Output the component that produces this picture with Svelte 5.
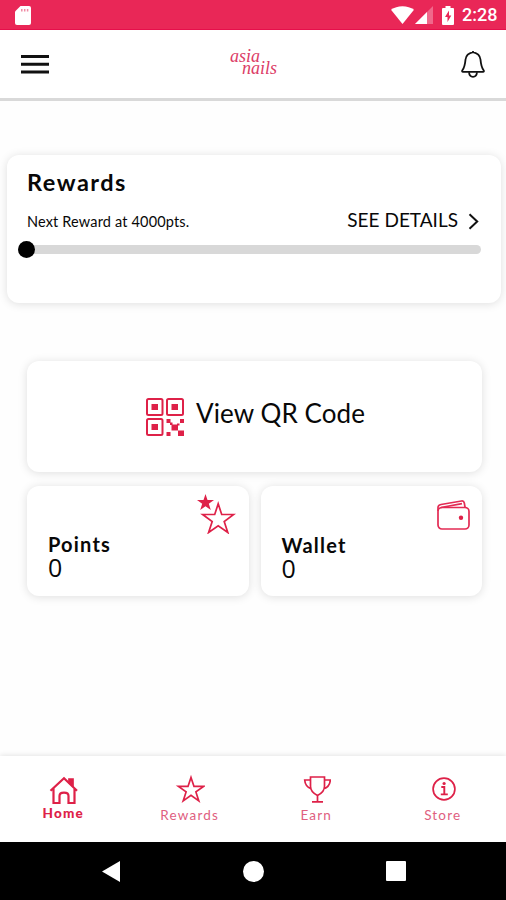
<script lang="ts">
	const cards = [
		{ id: "points", label: "Points", value: 0 },
		{ id: "wallet", label: "Wallet", value: 0 },
	];

	const tabs = ["Home", "Rewards", "Earn", "Store"];

	let active = $state("Home");
	let progress = $state(0);
</script>

<div class="screen">
	<div class="status-bar">
		<svg class="sd-card" width="16" height="19" viewBox="0 0 16 19">
			<path d="M5.5 0H14a2 2 0 0 1 2 2v15a2 2 0 0 1-2 2H2a2 2 0 0 1-2-2V5.5z" fill="#fff" />
			<path d="M6.8 3v2.4M9.7 3v2.4M12.6 3v2.4" stroke="#f08aa4" stroke-width="1.5" />
		</svg>
		<svg class="wifi" width="23" height="18" viewBox="0 0 23 18">
			<path d="M11.5 18 0 3.8C6-1.1 17-1.1 23 3.8z" fill="#fff" />
		</svg>
		<svg class="signal" width="18" height="18" viewBox="0 0 18 18">
			<path d="M18 0v18H0z" fill="#f0688b" />
			<path d="M12 6v12H0z" fill="#fff" />
		</svg>
		<svg class="battery" width="12" height="19" viewBox="0 0 12 19">
			<path d="M3.5 0h5v2H11a1 1 0 0 1 1 1v15a1 1 0 0 1-1 1H1a1 1 0 0 1-1-1V3a1 1 0 0 1 1-1h2.500z" fill="#fff" />
			<path d="M7 4.500 3 11h2.500v5l3.800-6.500H7z" fill="#e92757" />
		</svg>
		<span class="clock">2:28</span>
	</div>

	<header class="header">
		<button class="icon-btn" aria-label="Menu">
			<svg width="28" height="20" viewBox="0 0 28 20">
				<path d="M0 2.500h28M0 10.200h28M0 18h28" stroke="#111" stroke-width="3" />
			</svg>
		</button>
		<div class="logo">
			<span>asia</span>
			<span class="logo-second">nails</span>
		</div>
		<button class="icon-btn" aria-label="Notifications">
			<svg width="24" height="28" viewBox="0 0 24 28" fill="none" stroke="#111" stroke-width="1.800" stroke-linejoin="round">
				<path d="M12 1v1.500M12 2.200C8.500 3 5 5.500 4.500 9.500c-.4 4.500-.6 7.500-3.100 10.700-.6 1-.3 1.600.6 1.600h20c.9 0 1.200-.6.6-1.600-2.500-3.200-2.700-6.200-3.100-10.700C19 5.500 15.500 3 12 2.200z" />
				<path d="M8 22.300c.5 6 7.500 6 8 0" />
			</svg>
		</button>
	</header>

	<main class="content">
		<section class="card rewards">
			<h2 class="rewards-title">Rewards</h2>
			<div class="rewards-row">
				<span class="next-reward">Next Reward at 4000pts.</span>
				<button class="details">
					<span class="details-text">SEE DETAILS</span>
					<svg width="11" height="18" viewBox="0 0 11 18">
						<path d="m1.500 2.300 7.700 7.200-7.700 7.200" fill="none" stroke="#111" stroke-width="2" />
					</svg>
				</button>
			</div>
			<div class="track">
				<div class="thumb" style="left: {progress}%"></div>
			</div>
		</section>

		<button class="card qr">
			<svg width="38" height="38" viewBox="0 0 38 38" fill="none" stroke="#de2148" stroke-width="2">
				<rect x="1" y="1" width="15.500" height="16" rx="1.500" />
				<rect x="21" y="1" width="16" height="16" rx="1.500" />
				<rect x="1" y="21" width="15.500" height="16" rx="1.500" />
				<path d="M5.500 6h6.500v6H5.500zM25.500 6H32v6h-6.500zM5.500 26h6.500v6H5.500zM20.500 21h4v4h-4zM34 21h4v4h-4zM25.500 26.500h6.500v6h-6.500zM20.500 34h4v4h-4zM32 32.500h6V38h-6zM24 24.500h2.500v2.500H24zM31 25.500h2.500v2H31z" fill="#de2148" stroke="none" />
			</svg>
			<span class="qr-text">View QR Code</span>
		</button>

		<div class="card-row">
			{#each cards as card}
				<section class="card small {card.id}">
					<div class="small-icon">
						{#if card.id === "points"}
							<svg width="39" height="40" viewBox="0 0 39 40">
								<path d="m8.500 0 2 6H17l-5.200 3.800 2 6.200-5.300-3.800L3.200 16l2-6.200L0 6h6.500z" fill="#de2148" />
								<path d="m21.200 9.800 3.500 10.700h12l-9.500 7 3.600 11-9.600-6.700-9.600 6.700 3.600-11-9.500-7h12z" fill="none" stroke="#de2148" stroke-width="1.700" />
							</svg>
						{:else}
							<svg width="33" height="30" viewBox="0 0 33 30" fill="none" stroke="#e32b54" stroke-width="1.700">
								<rect x="1" y="7.500" width="31" height="21.500" rx="4" />
								<path d="M1 11V7.500C1 5.500 2.500 4.800 4 4.500L24.500 1c1.500-.2 2.500.5 2.800 2l.8 4.500M4 7.500l21-3.800" />
								<circle cx="24" cy="17.800" r="2.200" fill="#de2148" stroke="none" />
							</svg>
						{/if}
					</div>
					<h3 class="small-label">{card.label}</h3>
					<div class="small-value">{card.value}</div>
				</section>
			{/each}
		</div>
	</main>

	<nav class="tab-bar">
		{#each tabs as tab}
			<button class="tab" class:active={tab === active} onclick={() => (active = tab)}>
				<svg width="30" height="30" viewBox="0 0 30 30" fill="none" stroke="#de2148" stroke-width="1.700">
					{#if tab === "Home"}
						<path d="M2.500 16.700 16 4.200l13 12.500M5.500 14.500V29h6v-7c0-4.500 9-4.500 9 0v7h6V14.500" stroke-width="2.200" />
						<path d="M21 5h4v7l-4-3.500z" fill="#de2148" />
					{:else if tab === "Rewards"}
						<path d="m16 3.500 3 8.900h9.600l-7.700 5.500 2.900 9-7.800-5.500-7.800 5.500 2.900-9-7.700-5.500H13z" />
					{:else if tab === "Earn"}
						<path d="M9.500 3h14v9.500c0 5-3.500 7.200-7 9-3.500-1.800-7-4-7-9zM16.500 21.500v6M11 27.800h11M9.500 6H3.700c.3 5 2.500 7.500 6.800 9M23.500 6h5.800c-.3 5-2.500 7.500-6.800 9" />
					{:else}
						<circle cx="16" cy="15" r="10.900" />
						<path d="M13.300 13h3v7M12.800 20.400h7" stroke-width="1.900" />
						<circle cx="16.100" cy="9.500" r="1.600" fill="#de2148" stroke="none" />
					{/if}
				</svg>
				<span>{tab}</span>
			</button>
		{/each}
	</nav>

	<div class="system-nav">
		<svg width="18" height="21" viewBox="0 0 18 21"><path d="M18 0v21L0 10.500z" fill="#fff" /></svg>
		<svg width="21" height="21" viewBox="0 0 21 21"><circle cx="10.500" cy="10.500" r="10.500" fill="#fff" /></svg>
		<svg width="20" height="20" viewBox="0 0 20 20"><rect width="20" height="20" rx="1" fill="#fff" /></svg>
	</div>
</div>

<style>
	:global(body) {
		margin: 0;
		background: #fff;
	}

	.screen {
		width: 506px;
		height: 900px;
		display: flex;
		flex-direction: column;
		overflow: hidden;
		font-family: Lato, "Liberation Sans", sans-serif;
		color: #080808;
		background: #fefefe;
	}

	svg {
		display: block;
		flex: none;
	}

	button {
		border: 0;
		padding: 0;
		background: none;
		font-family: inherit;
		color: inherit;
		cursor: pointer;
	}

	h2,
	h3 {
		margin: 0;
	}

	.status-bar {
		box-sizing: border-box;
		height: 30px;
		flex: none;
		display: flex;
		align-items: center;
		padding: 1px 9px 0 15px;
		background: #e92757;
		border-bottom: 1px solid #e60f4b;
	}

	.wifi {
		margin-left: auto;
	}

	.signal {
		margin-left: 1px;
	}

	.battery {
		margin-left: 9px;
	}

	.clock {
		margin-left: 8px;
		width: 35px;
		font-family: Roboto, sans-serif;
		font-size: 18px;
		font-weight: 500;
		line-height: 20px;
		color: #fff;
		white-space: nowrap;
	}

	.header {
		box-sizing: border-box;
		height: 71px;
		flex: none;
		display: flex;
		align-items: center;
		justify-content: space-between;
		padding: 0 21px;
		border-bottom: 3px solid #d9d9d9;
		background: #fff;
	}

	.logo {
		display: flex;
		flex-direction: column;
		width: 50px;
		margin: 0 0 5px;
		font-family: "Liberation Serif", serif;
		font-style: italic;
		font-size: 18px;
		line-height: 12px;
		color: #dc3c66;
	}

	.logo-second {
		padding-left: 12px;
	}

	.content {
		flex: 1;
		display: flex;
		flex-direction: column;
		padding-top: 54px;
	}

	.card {
		box-sizing: border-box;
		border-radius: 12px;
		background: #fff;
		box-shadow: 0 1px 10px rgba(0, 0, 0, 0.13);
	}

	.rewards {
		margin: 0 5px 0 7px;
		height: 148px;
		padding: 14px 20px 0;
	}

	.rewards-title {
		font-size: 23.5px;
		font-weight: 700;
		line-height: 26px;
		letter-spacing: 1.5px;
	}

	.rewards-row {
		display: flex;
		align-items: center;
		justify-content: space-between;
		height: 28px;
		margin-top: 12px;
	}

	.next-reward {
		font-size: 14.5px;
		letter-spacing: 0.16px;
		white-space: nowrap;
	}

	.details {
		display: flex;
		align-items: center;
		gap: 10px;
		margin-right: 2px;
		font-size: 19px;
		white-space: nowrap;
	}

	.details-text {
		padding-bottom: 3px;
	}

	.track {
		position: relative;
		height: 9px;
		margin-top: 10px;
		border-radius: 5px;
		background: #d8d8d8;
	}

	.thumb {
		position: absolute;
		top: -4px;
		width: 17px;
		height: 17px;
		margin-left: -9px;
		border-radius: 50%;
		background: #000;
	}

	.qr {
		display: flex;
		align-items: center;
		gap: 12px;
		height: 111px;
		margin: 58px 24px 0 27px;
		padding-left: 119px;
		font-size: 26px;
		letter-spacing: 0.1px;
		white-space: nowrap;
	}

	.qr-text {
		padding-bottom: 8px;
	}

	.card-row {
		display: grid;
		grid-template-columns: 1fr 1fr;
		gap: 12px;
		margin: 14px 24px 0 27px;
	}

	.small {
		height: 110px;
		padding: 8px 12px 0 21px;
	}

	.points {
		padding-right: 13px;
	}

	.small-icon {
		display: flex;
		justify-content: flex-end;
		height: 38px;
	}

	.wallet .small-icon {
		box-sizing: border-box;
		padding-top: 6px;
	}

	.small-label {
		font-size: 20px;
		font-weight: 700;
		line-height: 24px;
		letter-spacing: 1.2px;
	}

	.wallet .small-label {
		margin-top: 1px;
	}

	.small-value {
		font-family: "Open Sans", sans-serif;
		font-size: 25px;
		line-height: 23px;
	}

	.tab-bar {
		height: 86px;
		flex: none;
		display: grid;
		grid-template-columns: repeat(4, 1fr);
		background: #fff;
		box-shadow: 0 -1px 5px rgba(0, 0, 0, 0.1);
	}

	.tab {
		display: flex;
		flex-direction: column;
		align-items: center;
		padding-top: 18px;
		font-size: 13.5px;
		line-height: 16px;
		letter-spacing: 1.2px;
		color: #e0607f;
	}

	.tab span {
		margin-top: 3px;
	}

	.tab.active {
		font-weight: 900;
		color: #de2148;
	}

	.tab.active span {
		margin-top: 1px;
	}

	.system-nav {
		height: 58px;
		flex: none;
		display: flex;
		align-items: center;
		justify-content: space-between;
		box-sizing: border-box;
		padding: 0 100px 0 102px;
		background: #000;
	}
</style>
